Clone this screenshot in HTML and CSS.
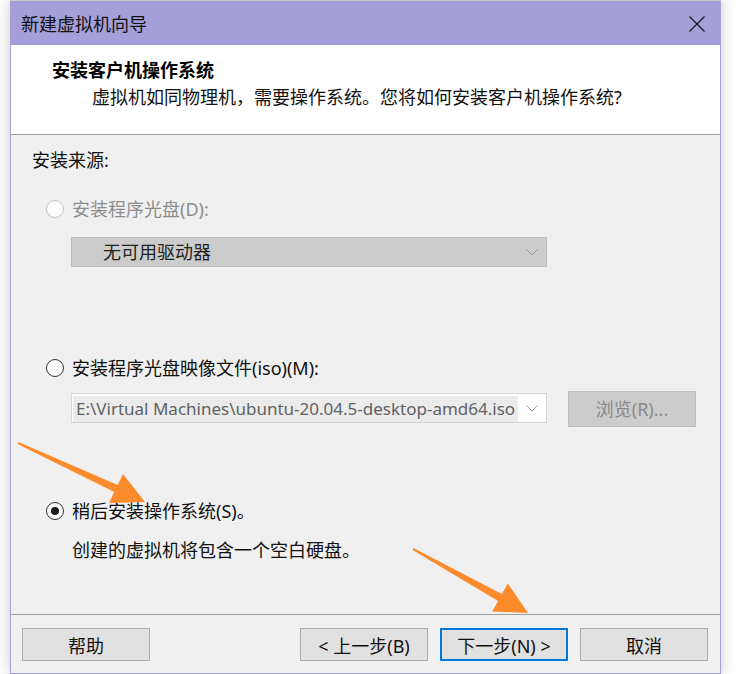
FILE: index.html
```html
<!DOCTYPE html>
<html lang="zh-CN">
<head>
<meta charset="utf-8">
<title>新建虚拟机向导</title>
<link rel="stylesheet" href="styles.css">
</head>
<body>
<div class="screen">
  <div class="window">
    <div class="titlebar">
      <span class="title">新建虚拟机向导</span>
      <svg class="close" width="16" height="16" viewBox="0 0 16 16"><path d="M0.5 0.5 L15.5 15.5 M15.5 0.5 L0.5 15.5" stroke="#111" stroke-width="1.1" fill="none"/></svg>
    </div>
    <div class="header">
      <div class="h-title">安装客户机操作系统</div>
      <div class="h-sub">虚拟机如同物理机，需要操作系统。您将如何安装客户机操作系统?</div>
    </div>
    <div class="content">
      <div class="label">安装来源:</div>
      <div class="radio-row r1 disabled"><span class="radio"></span><span>安装程序光盘(D):</span></div>
      <div class="select disabled-select"><span class="select-text">无可用驱动器</span><svg class="chev" width="12" height="7" viewBox="0 0 12 7"><path d="M0.5 0.5 L6 6 L11.5 0.5" stroke="#9a9a9a" fill="none"/></svg></div>
      <div class="radio-row r2"><span class="radio"></span><span>安装程序光盘映像文件(iso)(M):</span></div>
      <div class="iso-row">
        <div class="select iso"><span class="iso-text">E:\Virtual Machines\ubuntu-20.04.5-desktop-amd64.iso</span><svg class="chev" width="12" height="7" viewBox="0 0 12 7"><path d="M0.5 0.5 L6 6 L11.5 0.5" stroke="#a0a0a0" fill="none"/></svg></div>
        <div class="browse">浏览(R)...</div>
      </div>
      <div class="radio-row r3"><span class="radio checked"></span><span>稍后安装操作系统(S)。</span></div>
      <div class="desc">创建的虚拟机将包含一个空白硬盘。</div>
    </div>
    <div class="footer">
      <div class="btn help">帮助</div>
      <div class="btn-group">
        <div class="btn">&lt; 上一步(B)</div>
        <div class="btn primary">下一步(N) &gt;</div>
        <div class="btn">取消</div>
      </div>
    </div>
  </div>
  <svg class="arrows" width="745" height="674" viewBox="0 0 745 674">
    <polygon fill="#fd8a2b" points="18.4,442.1 117.7,484.9 123,474 145,502 109,503 114.3,492.1 17.6,443.9"/>
    <polygon fill="#fd8a2b" points="413.4,548.1 501.9,593.9 507.8,583.4 528,613 492.2,611.4 498.1,600.9 412.6,549.9"/>
  </svg>
</div>
</body>
</html>
```
FILE: styles.css
```css
html, body {
  margin: 0;
  padding: 0;
  background: #ffffff;
}
.screen {
  position: relative;
  width: 745px;
  height: 674px;
  overflow: hidden;
  background: #ffffff;
  font-family: "Noto Sans", "Noto Sans CJK SC", sans-serif;
  font-size: 18px;
  color: #111;
}
.window {
  margin-left: 10px;
  width: 711px;
  height: 674px;
  box-sizing: border-box;
  border-left: 1px solid #a59fd9;
  border-right: 1px solid #a59fd9;
  border-bottom: 1px solid #a59fd9;
  box-shadow: 0 0 14px rgba(0, 0, 0, 0.22);
  display: flex;
  flex-direction: column;
  background: #f0f0f0;
}
.titlebar {
  height: 44px;
  flex: none;
  border-top: 1px solid #c9c9cc;
  background: #a59fd9;
  display: flex;
  align-items: center;
  justify-content: space-between;
  padding: 0 16px 0 10px;
  margin-left: -1px;
  margin-right: -1px;
}
.title {
  font-size: 18px;
  color: #111;
  margin-left: 1px;
  margin-top: -1px;
}
.close {
  display: block;
  margin-top: 1px;
}
.header {
  height: 90px;
  flex: none;
  box-sizing: border-box;
  background: #ffffff;
  border-bottom: 1px solid #a0a0a0;
  padding: 12px 0 0 41px;
  line-height: 26px;
}
.h-title {
  font-weight: bold;
  color: #000;
}
.h-sub {
  margin-top: 1px;
  margin-left: 40px;
  color: #111;
}
.content {
  height: 479px;
  flex: none;
  box-sizing: border-box;
  padding-top: 13px;
  background: #f0f0f0;
  line-height: 24px;
}
.label {
  padding-left: 21px;
  height: 24px;
}
.radio-row {
  display: flex;
  align-items: center;
  height: 24px;
  padding-left: 35px;
  gap: 8px;
}
.r1 { margin-top: 25px; }
.r2 { margin-top: 89px; }
.r3 { margin-top: 72px; }
.radio {
  width: 18px;
  height: 18px;
  box-sizing: border-box;
  border-radius: 50%;
  border: 1px solid #333;
  background: #fff;
  display: flex;
  align-items: center;
  justify-content: center;
  flex: none;
}
.radio.checked::after {
  content: "";
  width: 8px;
  height: 8px;
  border-radius: 50%;
  background: #1a1a1a;
}
.disabled { color: #8d8d8d; }
.disabled .radio {
  border-color: #c2c2c2;
  background: #fdfdfd;
}
.select {
  margin-left: 60px;
  width: 476px;
  height: 30px;
  box-sizing: border-box;
  border: 1px solid #bdbdbd;
  display: flex;
  align-items: center;
  justify-content: space-between;
  padding: 0 8px 0 31px;
}
.disabled-select {
  margin-top: 16px;
  background: #cccccc;
  color: #222;
}
.iso-row {
  margin-top: 11px;
  height: 36px;
  display: flex;
  align-items: flex-start;
}
.select.iso {
  margin-top: 2px;
  background: #fff;
  border-color: #d6d6d6;
  padding: 1px 8px 0 1px;
}
.iso-text {
  background: #ebebeb;
  color: #626262;
  font-size: 17px;
  padding: 0 3px 0 3px;
  line-height: 26px;
  white-space: nowrap;
}
.browse {
  margin-left: 21px;
  width: 128px;
  height: 36px;
  box-sizing: border-box;
  border: 1px solid #bfbfbf;
  background: #cccccc;
  color: #8a8a8a;
  display: flex;
  align-items: center;
  justify-content: center;
}
.desc {
  margin-top: 15px;
  padding-left: 61px;
  height: 24px;
}
.footer {
  flex: 1;
  border-top: 1px solid #a0a0a0;
  display: flex;
  align-items: flex-start;
  justify-content: space-between;
  padding: 13px 12px 0 11px;
  background: #f0f0f0;
}
.btn-group {
  display: flex;
  gap: 12px;
}
.btn {
  width: 128px;
  height: 33px;
  box-sizing: border-box;
  border: 1px solid #adadad;
  background: #e1e1e1;
  display: flex;
  align-items: center;
  justify-content: center;
  color: #111;
}
.btn.primary {
  border: 2px solid #0078d7;
}
.arrows {
  position: absolute;
  left: 0;
  top: 0;
  pointer-events: none;
}
```
